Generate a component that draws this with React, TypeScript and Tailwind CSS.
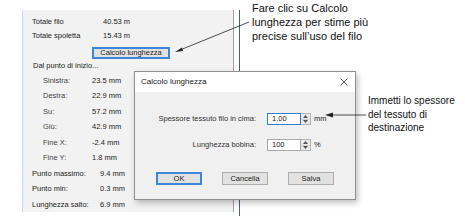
import React from "react";

const panelRows = [
  { label: "Sinistra:", value: "23.5 mm", indent: true },
  { label: "Destra:", value: "22.9 mm", indent: true },
  { label: "Su:", value: "57.2 mm", indent: true },
  { label: "Giù:", value: "42.9 mm", indent: true },
  { label: "Fine X:", value: "-2.4 mm", indent: true },
  { label: "Fine Y:", value: "1.8 mm", indent: true },
  { label: "Punto massimo:", value: "9.4 mm", indent: false },
  { label: "Punto min:", value: "0.3 mm", indent: false },
  { label: "Lunghezza salto:", value: "6.9 mm", indent: false },
];

function Spinner() {
  return (
    <div className="flex h-full w-[10px] flex-col border border-l-0 border-[#b4b4b4] bg-[#eaeaea]">
      <div className="flex flex-1 items-center justify-center border-b border-[#cfcfcf]">
        <svg width="5" height="3" viewBox="0 0 5 3">
          <path d="M0 3 L2.5 0 L5 3 Z" fill="#555" />
        </svg>
      </div>
      <div className="flex flex-1 items-center justify-center">
        <svg width="5" height="3" viewBox="0 0 5 3">
          <path d="M0 0 L2.5 3 L5 0 Z" fill="#555" />
        </svg>
      </div>
    </div>
  );
}

function Panel() {
  return (
    <div className="flex h-[202px] w-[212px] flex-col border-l border-r border-l-[#c8d8ee] border-r-[#a3a3a3] bg-[#f2f2f2] pt-[5px] text-[7.5px] text-[#222]">
      <div className="flex h-[14px] items-center pl-[9px]">
        <span className="w-[71px]">Totale filo</span>
        <span>40.53 m</span>
      </div>
      <div className="flex h-[14px] items-center pl-[9px]">
        <span className="w-[71px]">Totale spoletta</span>
        <span>15.43 m</span>
      </div>
      <div className="mt-[4px] flex h-[12px] pl-[69px]">
        <div className="flex w-[78px] items-center justify-center border-2 border-[#3b86d8] bg-[#e1e1e1]">
          Calcolo lunghezza
        </div>
      </div>
      <div className="flex h-[14px] items-center pl-[10px]">Dal punto di inizio...</div>
      {panelRows.map((r) =>
        r.indent ? (
          <div key={r.label} className="flex h-[15.5px] items-center pl-[20px]">
            <span className="w-[49px] text-[#444]">{r.label}</span>
            <span>{r.value}</span>
          </div>
        ) : (
          <div key={r.label} className="flex h-[15.5px] items-center pl-[9px]">
            <span className="w-[68px]">{r.label}</span>
            <span className="w-[25px] text-right">{r.value}</span>
          </div>
        )
      )}
    </div>
  );
}

function Dialog() {
  return (
    <div className="absolute left-[134px] top-[71px] flex h-[129px] w-[222px] flex-col border border-[#8f8f8f] bg-[#f0f0f0] text-[7.5px] text-[#222] shadow-[2px_3px_6px_rgba(0,0,0,0.25)]">
      <div className="flex h-[20px] items-center justify-between bg-white pl-[6px] pr-[7px]">
        <span className="text-[8px]">Calcolo lunghezza</span>
        <svg width="8" height="8" viewBox="0 0 8 8">
          <path d="M0.5 0.5 L7.5 7.5 M7.5 0.5 L0.5 7.5" stroke="#333" strokeWidth="0.8" />
        </svg>
      </div>
      <div className="flex flex-col pt-[21px]">
        <div className="flex h-[12px] items-center">
          <span className="w-[121px] text-right text-[#333]">Spessore tessuto filo in cima:</span>
          <div className="ml-[11px] flex h-full">
            <div className="flex w-[34px] items-center border border-[#2f7fd6] bg-white pl-[4px]">1.00</div>
            <Spinner />
          </div>
          <span className="ml-[3px]">mm</span>
        </div>
        <div className="mt-[14px] flex h-[12px] items-center">
          <span className="w-[121px] text-right text-[#333]">Lunghezza bobina:</span>
          <div className="ml-[11px] flex h-full">
            <div className="flex w-[34px] items-center border border-[#a9a9a9] bg-white pl-[4px]">100</div>
            <Spinner />
          </div>
          <span className="ml-[3px]">%</span>
        </div>
        <div className="mt-[21px] flex h-[13px] gap-[20px] pl-[21px]">
          <div className="flex w-[46px] items-center justify-center border-2 border-[#3b86d8] bg-[#e1e1e1]">OK</div>
          <div className="flex w-[46px] items-center justify-center border border-[#adadad] bg-[#e1e1e1]">Cancella</div>
          <div className="flex w-[46px] items-center justify-center border border-[#adadad] bg-[#e1e1e1]">Salva</div>
        </div>
      </div>
    </div>
  );
}

export default function App() {
  return (
    <div className="relative h-[216px] w-[465px] overflow-hidden bg-white font-['Liberation_Sans',Arial,sans-serif]">
      <div className="flex h-full pl-[22px] pt-[10px]">
        <Panel />
        <div className="ml-[5px] h-full w-px bg-[#3d5da6]" />
        <div className="flex flex-col pl-[12px] text-[#111]">
          <div className="-mt-[9px] text-[11px] leading-[14px]">
            Fare clic su Calcolo
            <br />
            lunghezza per stime più
            <br />
            precise sull’uso del filo
          </div>
          <div className="ml-[116px] mt-[51px] text-[10px] leading-[13.5px]">
            Immetti lo spessore
            <br />
            del tessuto di
            <br />
            destinazione
          </div>
        </div>
      </div>
      <Dialog />
      <svg className="pointer-events-none absolute left-0 top-0" width="465" height="216">
        <line x1="249" y1="22" x2="180" y2="50" stroke="#222" strokeWidth="0.8" />
        <path d="M175 52 L182 47.5 L183 51 Z" fill="#222" />
        <line x1="366" y1="115" x2="331" y2="115" stroke="#222" strokeWidth="0.8" />
        <path d="M325 115 L333 112.5 L333 117.5 Z" fill="#222" />
      </svg>
    </div>
  );
}
